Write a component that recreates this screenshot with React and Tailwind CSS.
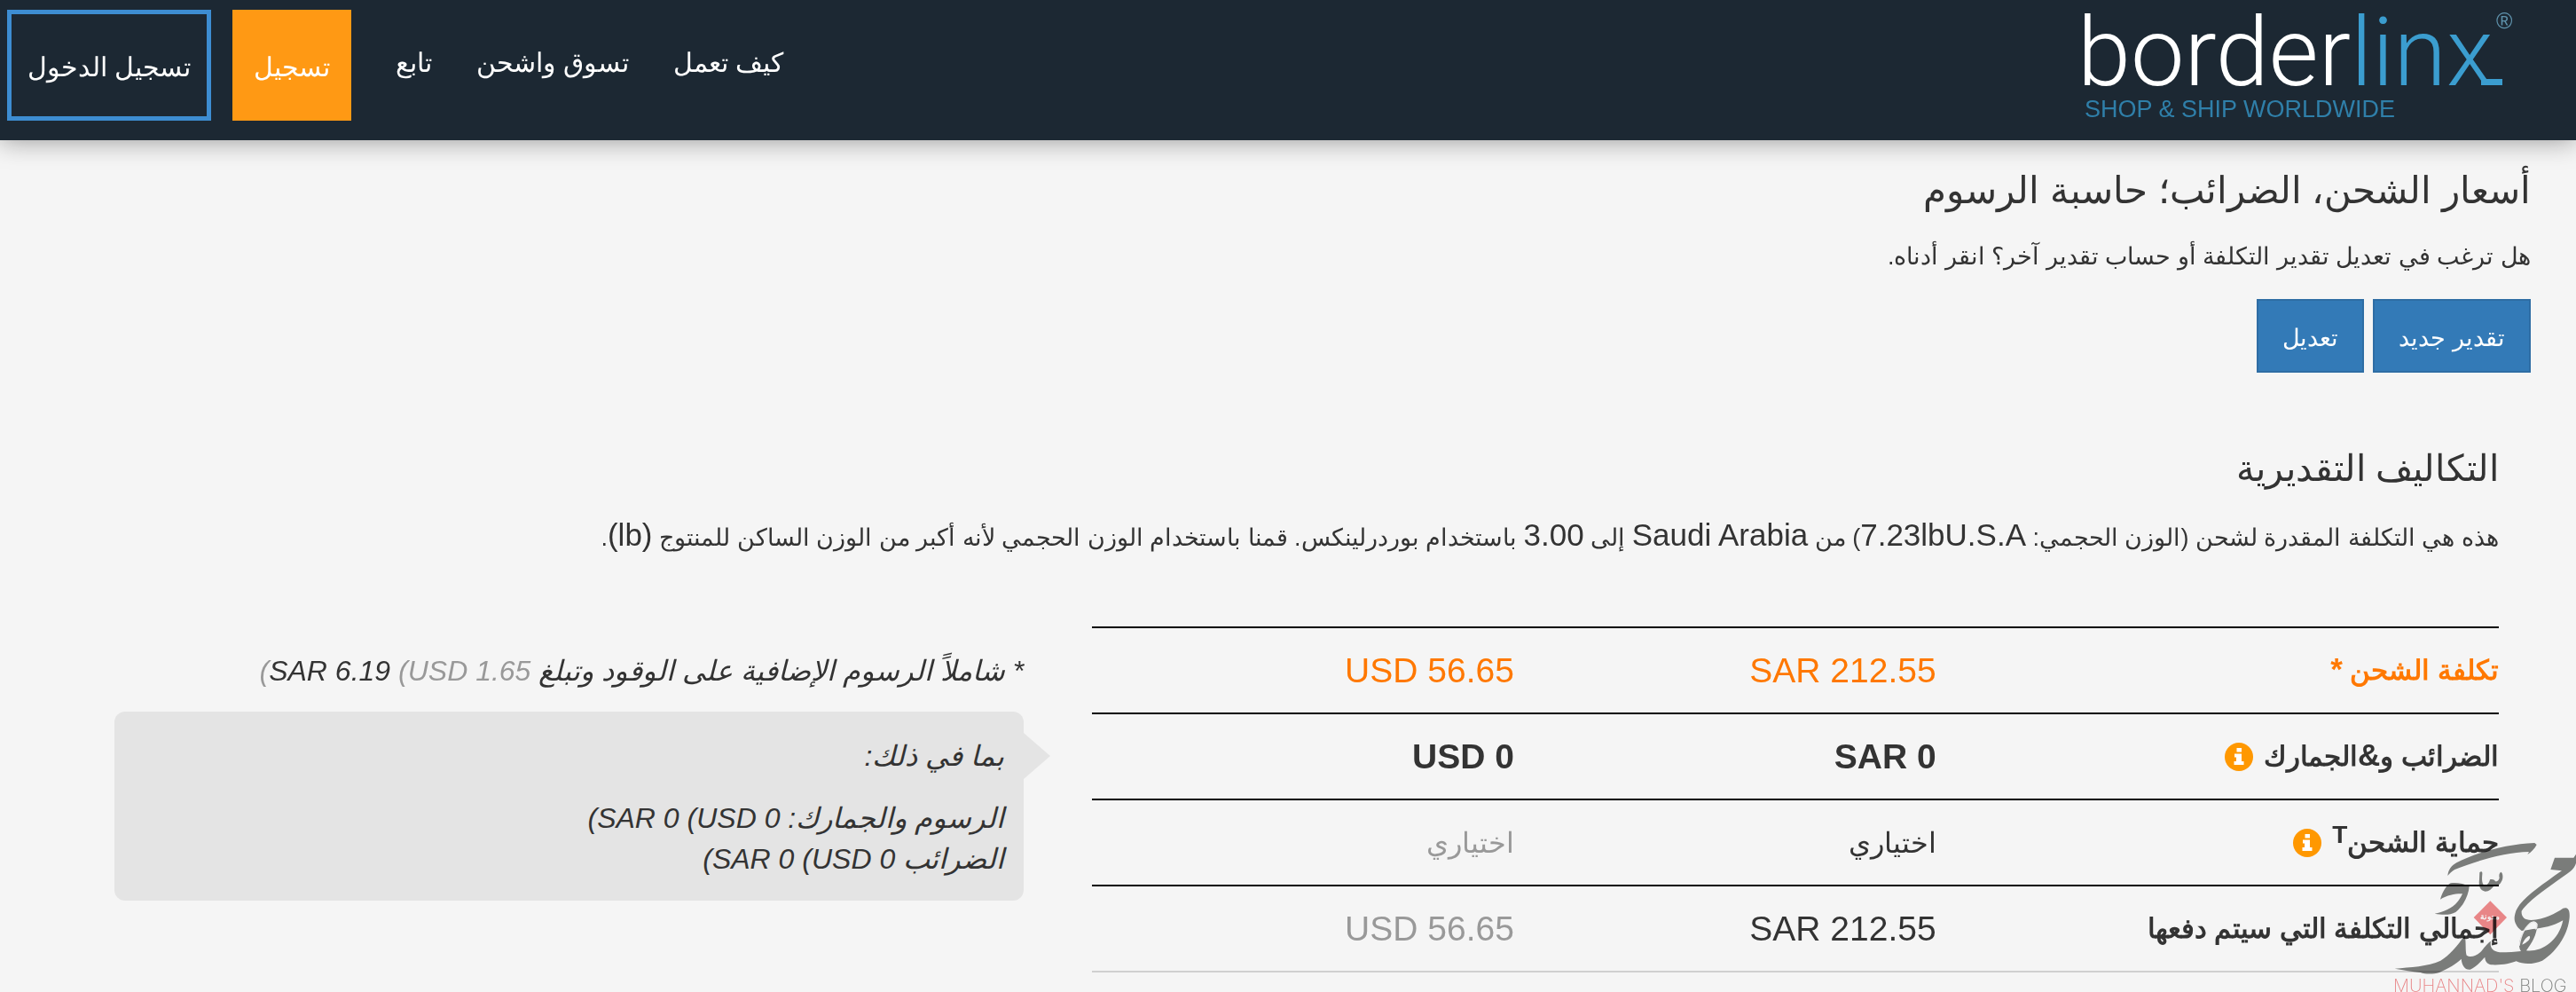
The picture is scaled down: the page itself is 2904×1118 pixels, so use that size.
function Logo() {
  return (
    <a href="#" dir="ltr" aria-label="borderlinx" className="relative block w-[484px] text-left leading-none">
      <span className="-ml-2 block whitespace-nowrap font-[Roboto] text-[108px] font-light leading-[96px] text-white">
        border<span className="text-[#3b9dcf]">linx</span>
      </span>
      <span className="absolute left-[447px] top-[78px] h-[7px] w-6 bg-[#3b9dcf]" />
      <span className="absolute left-[464px] top-0 text-[25px] text-[#5f93ad]">®</span>
      <span className="mt-1 block whitespace-nowrap text-[27px] leading-6 text-[#2f7fa9]">SHOP &amp; SHIP WORLDWIDE</span>
    </a>
  );
}

function InfoButton({ label }) {
  return (
    <button type="button" aria-label={label} className="mr-3 inline-block size-8 align-[-6px]">
      <svg viewBox="0 0 32 32" className="block size-8">
        <circle cx="16" cy="16" r="16" fill="#ff9800" />
        <path d="M13.5 6h5.5v4.5h-5.5zM11 12.5h8V21h2.5v4h-11v-4H13v-4.5h-2z" fill="#fff" />
      </svg>
    </button>
  );
}

function Watermark() {
  return (
    <svg viewBox="0 0 732 564" className="pointer-events-none absolute bottom-[-22px] left-full ml-[-157px] h-[188px] w-[244px] mix-blend-multiply" aria-hidden="true">
      <g fill="#7f817f">
        <path d="M298 171C300 150 312 136 328 127C400 90 500 64 592 60L599 66C592 80 582 90 568 99L573 90C490 92 390 122 322 150C312 156 305 163 298 171Z" />
        <path d="M406 160C412 154 416 157 415 166C413 185 414 200 424 206C432 202 440 192 441 184C449 182 456 184 459 190C466 192 472 186 473 178C471 170 472 162 478 158C486 162 486 182 480 190C476 202 466 205 456 203C448 214 438 224 425 224C408 222 402 206 405 184Z" />
        <path d="M273 251C279 228 292 205 308 196C326 193 352 196 371 207C368 240 350 274 325 294C304 306 278 303 254 299C290 293 330 275 348 232C334 230 298 234 273 251Z" />
        <path fillRule="evenodd" d="M660 110L724 110L732 98V128C728 143 716 155 702 164C650 202 575 250 548 290C546 310 558 321 580 321C624 318 664 298 688 281C702 276 712 282 710 312C706 364 672 424 618 458C588 470 556 472 530 460C510 468 480 474 444 472C430 468 424 458 424 446C412 458 392 482 374 488C356 490 346 474 344 452C326 470 300 484 270 498C250 504 222 504 206 498C178 496 150 490 119 485C170 480 232 478 274 458C304 440 330 410 356 372C361 398 357 424 362 440C376 450 398 440 412 426C426 408 434 398 444 392C440 412 448 426 474 430C504 430 526 428 546 426C530 402 548 366 574 332C584 322 596 324 602 334C598 374 584 396 564 424C610 430 672 398 688 322C654 342 616 348 596 350C584 350 566 356 548 357C526 340 520 320 526 300C534 260 590 220 684 154L646 150ZM550 404C568 396 582 382 574 374C564 378 554 390 550 404Z" />
      </g>
      <path d="M540 408C546 370 562 336 586 328C602 324 602 346 594 352" fill="none" stroke="#f5f5f5" strokeWidth="4" />
      <path d="M442 256L498 312L442 370L386 312Z" fill="#f28b8d" />
      <text x="442" y="319" textAnchor="middle" fontSize="28" fontWeight="700" fill="#fff">مدونة</text>
      <text x="114" y="563" direction="ltr" fontFamily="Inter" fontWeight="200" fontSize="60" fill="#f28b8d" className="whitespace-pre">
        {"MUHANNAD'S "}<tspan fill="#7f817f">BLOG</tspan>
      </text>
    </svg>
  );
}

const navLinks = ["كيف تعمل", "تسوق واشحن", "تابع"];

const rows = [
  { label: "تكلفة الشحن *", sar: "SAR 212.55", usd: "USD 56.65", tone: "text-[#ff7800]", usdTone: "" },
  { label: "الضرائب و&الجمارك", info: "الضرائب والجمارك", sar: "SAR 0", usd: "USD 0", tone: "text-[#333]", strong: true, usdTone: "" },
  { label: "حماية الشحن", sup: "T", info: "حماية الشحن", sar: "اختياري", usd: "اختياري", arabic: true, tone: "text-[#333]", usdTone: "text-[#999]" },
  { label: "إجمالي التكلفة التي سيتم دفعها", sar: "SAR 212.55", usd: "USD 56.65", tone: "text-[#333]", usdTone: "text-[#999]" },
];

function Mark({ text }) {
  return text.split(/([*&])/).map((part, i) =>
    /[*&]/.test(part) ? <span key={i} className="text-[35px] leading-none">{part}</span> : part
  );
}

export default function App() {
  return (
    <div dir="rtl" className="min-h-screen overflow-hidden bg-[#f5f5f5] font-['Liberation_Sans',Arial,serif] text-[27px] leading-[48px] text-[#333]">
      <header className="flex items-start justify-between bg-[#1c2833] pb-[22px] pl-2 pr-[70px] pt-[11px] shadow-[0_0_28px_rgba(0,0,0,0.4)]">
        <Logo />
        <nav className="flex items-start text-[30px] text-white">
          <div className="ml-[50px] flex gap-[50px] pt-9">
            {navLinks.map((l) => <a key={l} href="#" className="whitespace-nowrap">{l}</a>)}
          </div>
          <a href="#" className="ml-6 flex h-[125px] items-center bg-[#ff9914] px-6 pt-1">تسجيل</a>
          <a href="#" className="flex h-[125px] items-center whitespace-nowrap border-[5px] border-[#3d8dd2] px-[18px] pt-1">تسجيل الدخول</a>
        </nav>
      </header>

      <main>
        <section className="pr-[51px] pt-[27px]">
          <h1 className="text-[42px] leading-[60px]">أسعار الشحن، الضرائب؛ حاسبة الرسوم</h1>
          <p className="mt-5">هل ترغب في تعديل تقدير التكلفة أو حساب تقدير آخر؟ انقر أدناه.</p>
          <div className="mt-6 flex gap-[10px] text-white">
            <button type="button" className="h-[83px] border-2 border-[#2e6da4] bg-[#337ab7] px-[27px] pt-1">تقدير جديد</button>
            <button type="button" className="h-[83px] border-2 border-[#2e6da4] bg-[#337ab7] px-[27px] pt-1">تعديل</button>
          </div>
        </section>

        <section className="pl-[129px] pr-[87px] pt-[78px]">
          <h2 className="text-[41px] leading-[60px]">التكاليف التقديرية</h2>
          <p className="mt-6">
            هذه هي التكلفة المقدرة لشحن (الوزن الحجمي: <bdi dir="ltr" className="text-[35px] leading-none">7.23lbU.S.A</bdi>) من{" "}
            <bdi className="text-[35px] leading-none">Saudi Arabia</bdi> إلى <bdi className="text-[35px] leading-none">3.00</bdi> باستخدام بوردرلينكس. قمنا باستخدام الوزن الحجمي لأنه أكبر من الوزن الساكن للمنتوج <bdi dir="ltr" className="text-[35px] leading-none">(lb)</bdi>.
          </p>

          <div className="mt-[76px] flex gap-[77px]">
            <div className="relative w-[59%] shrink-0">
              <table className="w-full table-fixed border-collapse border-b-2 border-[#d0d0d0] text-right">
                <tbody>
                  {rows.map((r) => (
                    <tr key={r.label} className={`h-[97px] border-t-2 border-t-black ${r.tone}`}>
                      <th scope="row" className="w-[40%] whitespace-nowrap text-right text-[31px] font-bold">
                        <Mark text={r.label} />
                        {r.sup && <sup className="relative top-[-10px] align-baseline text-[28px] leading-none">{r.sup}</sup>}
                        {r.info && <InfoButton label={r.info} />}
                      </th>
                      <td className={`w-[30%] ${r.arabic ? "text-[32px]" : "text-[39px]"} ${r.strong ? "font-bold" : ""}`}>
                        <bdi>{r.sar}</bdi>
                      </td>
                      <td className={`w-[30%] ${r.arabic ? "text-[32px]" : "text-[39px]"} ${r.strong ? "font-bold" : ""} ${r.usdTone}`}>
                        <bdi>{r.usd}</bdi>
                      </td>
                    </tr>
                  ))}
                </tbody>
              </table>
              <Watermark />
            </div>

            <aside className="min-w-0 flex-1 pt-[26px] text-[32px] italic">
              <p className="whitespace-nowrap">
                * شاملاً الرسوم الإضافية على الوقود وتبلغ{" "}
                <bdi dir="ltr">
                  <span className="text-[#999]">(</span>SAR 6.19 <span className="text-[#999]">(USD 1.65</span>
                </bdi>
              </p>
              <div className="relative mt-[22px] rounded-xl bg-[#e4e4e4] pb-6 pr-[22px] pt-[27px] leading-[46px]">
                <svg viewBox="0 0 30 52" className="absolute left-full top-6 h-[52px] w-[30px]" aria-hidden="true">
                  <path d="M0 0L30 26L0 52Z" fill="#e4e4e4" />
                </svg>
                <p>بما في ذلك:</p>
                <p className="mt-6">الرسوم والجمارك: <bdi dir="ltr">(SAR 0 (USD 0</bdi></p>
                <p>الضرائب <bdi dir="ltr">(SAR 0 (USD 0</bdi></p>
              </div>
            </aside>
          </div>
        </section>
      </main>
    </div>
  );
}
